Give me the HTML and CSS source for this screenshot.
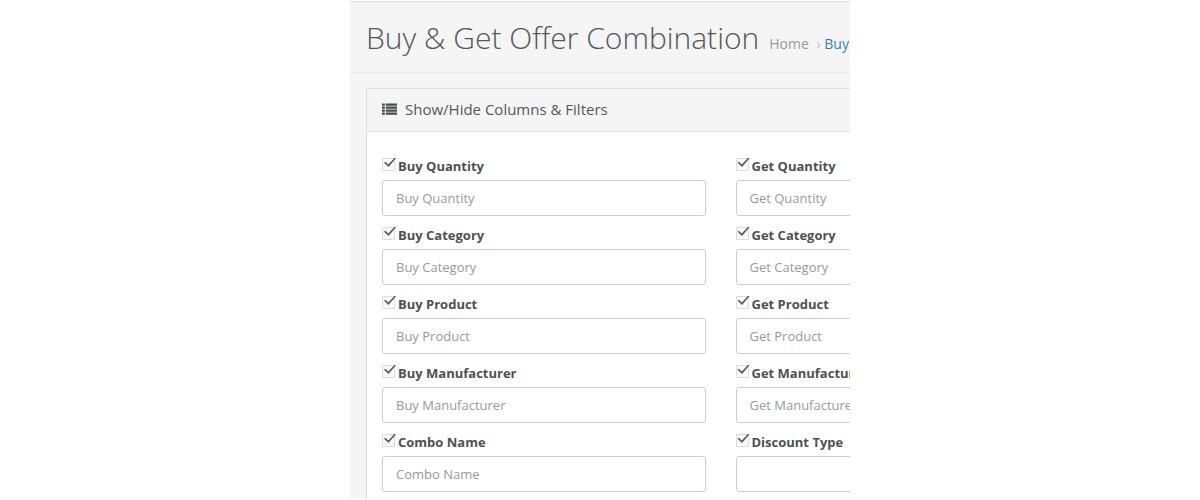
FILE: index.html
```
<!DOCTYPE html>
<html lang="en">
<head>
    <meta charset="UTF-8">
    <title>Buy &amp; Get Offer Combination</title>
    <link rel="stylesheet" href="styles.css">
</head>
<body>
<div class="frame">
    <div class="page">
        <header class="page-head">
            <h1>Buy &amp; Get Offer Combination</h1>
            <nav class="crumbs">
                <a href="#" class="home">Home</a>
                <span class="sep">›</span>
                <a href="#">Buy</a>
            </nav>
        </header>
        <section class="panel">
            <h2 class="panel-head">
                <svg class="icon" viewBox="0 0 16 12" aria-hidden="true">
                    <path d="M0 0h3v2.4H0zM4 0h12v2.4H4zM0 3.2h3v2.4H0zM4 3.2h12v2.4H4zM0 6.4h3v2.4H0zM4 6.4h12v2.4H4zM0 9.6h3V12H0zM4 9.6h12V12H4z"/>
                </svg>
                Show/Hide Columns &amp; Filters
            </h2>
            <form class="filters">
                <div class="field">
                    <label id="lb1"><input type="checkbox" class="check" checked>Buy Quantity</label>
                    <input type="text" class="control" placeholder="Buy Quantity" aria-labelledby="lb1">
                </div>
                <div class="field">
                    <label id="lg1"><input type="checkbox" class="check" checked>Get Quantity</label>
                    <input type="text" class="control" placeholder="Get Quantity" aria-labelledby="lg1">
                </div>
                <div class="field">
                    <label id="lb2"><input type="checkbox" class="check" checked>Buy Category</label>
                    <input type="text" class="control" placeholder="Buy Category" aria-labelledby="lb2">
                </div>
                <div class="field">
                    <label id="lg2"><input type="checkbox" class="check" checked>Get Category</label>
                    <input type="text" class="control" placeholder="Get Category" aria-labelledby="lg2">
                </div>
                <div class="field">
                    <label id="lb3"><input type="checkbox" class="check" checked>Buy Product</label>
                    <input type="text" class="control" placeholder="Buy Product" aria-labelledby="lb3">
                </div>
                <div class="field">
                    <label id="lg3"><input type="checkbox" class="check" checked>Get Product</label>
                    <input type="text" class="control" placeholder="Get Product" aria-labelledby="lg3">
                </div>
                <div class="field">
                    <label id="lb4"><input type="checkbox" class="check" checked>Buy Manufacturer</label>
                    <input type="text" class="control" placeholder="Buy Manufacturer" aria-labelledby="lb4">
                </div>
                <div class="field">
                    <label id="lg4"><input type="checkbox" class="check" checked>Get Manufacturer</label>
                    <input type="text" class="control" placeholder="Get Manufacturer" aria-labelledby="lg4">
                </div>
                <div class="field">
                    <label id="lb5"><input type="checkbox" class="check" checked>Combo Name</label>
                    <input type="text" class="control" placeholder="Combo Name" aria-labelledby="lb5">
                </div>
                <div class="field">
                    <label id="lg5"><input type="checkbox" class="check" checked>Discount Type</label>
                    <select class="control" aria-labelledby="lg5"><option></option></select>
                </div>
            </form>
        </section>
    </div>
</div>
</body>
</html>
```

FILE: styles.css
```
*{
    box-sizing: border-box;
}
body{
    margin:0;
    padding-top:1px;
    background: #fff;
    color: #54575d;
    font-family: "Open Sans", sans-serif;
    font-size: 13px;
}
.frame{
    max-width: 500px;
    height: calc(100vh - 3px);
    margin:0 auto;
    overflow: hidden;
    border-top:1px solid #dedede;
    background: #f5f5f5;
}
/* wider than the frame, the right part is cut off */
.page{
    width: 145%;
}
.page-head{
    display: flex;
    align-items: baseline;
    gap:10px;
    padding:16px 16px 14px;
    border-bottom:1px solid #e9e9e9;
    white-space: nowrap;
}
.page-head h1{
    margin:0;
    font-size: 30px;
    font-weight: 300;
    line-height: 40px;
}
.crumbs{
    font-size: 14px;
    color: #bbb;
}
.crumbs a{
    color: #2a84bd;
    text-decoration: none;
}
.crumbs .home{
    color: #999;
}
.crumbs .sep{
    margin-left:4px;
}
.panel{
    margin:15px 0 0 16px;
    border:1px solid #ddd;
    background: #fff;
}
.panel-head{
    display: flex;
    align-items: center;
    gap:8px;
    margin:0;
    padding:0 15px 2px;
    border-bottom:1px solid #ddd;
    background: #f5f5f5;
    font-size: 15px;
    font-weight: 400;
    line-height: 40px;
}
.icon{
    width: 15px;
    height: 12px;
    fill: #484b50;
}
.filters{
    display: grid;
    grid-template-columns: 1fr 1fr;
    gap:9px 30px;
    padding:24px 15px;
}
.field label{
    display: flex;
    align-items: center;
    gap:3px;
    height: 24px;
    padding-bottom:4px;
    color: #505050;
    font-weight: 700;
    line-height: 20px;
}
.check{
    appearance: none;
    position: relative;
    width: 13px;
    height: 13px;
    margin:0 0 4px;
    border:1px solid #ddd;
    background: #fafafa;
}
.check:checked::after{
    content: "";
    position: absolute;
    top:-1px;
    left:1px;
    width: 12px;
    height: 10px;
    background: #5a5a5a;
    clip-path: polygon(0 52%, 12% 42%, 36% 70%, 90% 0, 100% 8%, 38% 96%);
}
.control{
    appearance: none;
    display: block;
    width: 100%;
    height: 36px;
    padding:0 13px;
    border:1px solid #ccc;
    border-radius: 3px;
    background: #fff;
    color: #555;
    font: inherit;
}
.control::placeholder{
    color: #999;
}
```
